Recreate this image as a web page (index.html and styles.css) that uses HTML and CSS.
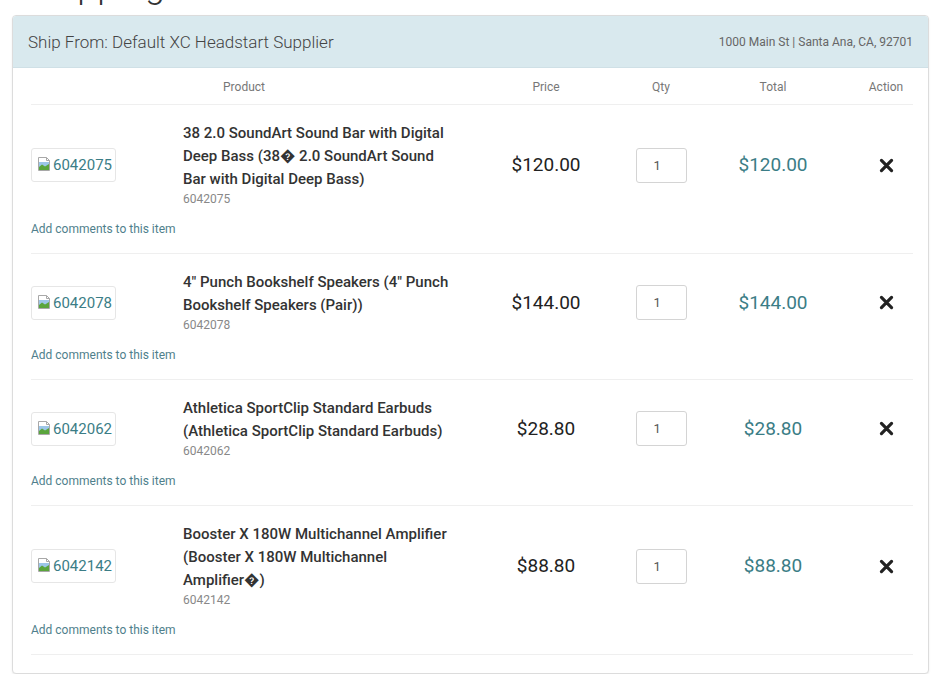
FILE: index.html
```html
<!DOCTYPE html>
<html lang="en">
<head>
<meta charset="utf-8">
<title>Shipping</title>
<link rel="stylesheet" href="styles.css">
</head>
<body>
<div class="page">
  <h2 class="page-title">Shipping</h2>
  <section class="panel">
    <header class="panel-head">
      <span class="ship-from">Ship From: Default XC Headstart Supplier</span>
      <span class="address">1000 Main St | Santa Ana, CA, 92701</span>
    </header>
    <div class="panel-body">
      <div class="cols cols-head">
        <div>Product</div>
        <div>Price</div>
        <div>Qty</div>
        <div>Total</div>
        <div>Action</div>
      </div>

      <div class="item">
        <div class="cols item-row">
          <div class="product">
            <div class="thumb-col">
              <span class="thumb"><svg class="broken" viewBox="0 0 16 16" width="16" height="16"><path d="M2.5 1.5h8l3 3v10h-11z" fill="#fff" stroke="#a8a8a8"/><path d="M10.5 1.5v3h3" fill="none" stroke="#a8a8a8"/><rect x="3" y="6" width="10" height="5" fill="#9cc6e8"/><path d="M3 14V11l3-2.5 3 2 4-2.5v6z" fill="#5aa53c"/></svg>6042075</span>
            </div>
            <div class="info">
              <div class="name">38 2.0 SoundArt Sound Bar with Digital Deep Bass (38&#xFFFD; 2.0 SoundArt Sound Bar with Digital Deep Bass)</div>
              <div class="sku">6042075</div>
            </div>
          </div>
          <div class="price">$120.00</div>
          <div class="qty"><input class="qty-input" type="text" value="1"></div>
          <div class="total">$120.00</div>
          <div class="action"><svg class="remove" viewBox="0 0 16 16" width="15" height="15"><path d="M2.6 2.6l10.8 10.8M13.4 2.6L2.6 13.4" stroke="#222" stroke-width="3.4" stroke-linecap="round"/></svg></div>
        </div>
        <a class="comment">Add comments to this item</a>
      </div>

      <div class="item">
        <div class="cols item-row">
          <div class="product">
            <div class="thumb-col">
              <span class="thumb"><svg class="broken" viewBox="0 0 16 16" width="16" height="16"><path d="M2.5 1.5h8l3 3v10h-11z" fill="#fff" stroke="#a8a8a8"/><path d="M10.5 1.5v3h3" fill="none" stroke="#a8a8a8"/><rect x="3" y="6" width="10" height="5" fill="#9cc6e8"/><path d="M3 14V11l3-2.5 3 2 4-2.5v6z" fill="#5aa53c"/></svg>6042078</span>
            </div>
            <div class="info">
              <div class="name">4" Punch Bookshelf Speakers (4" Punch Bookshelf Speakers (Pair))</div>
              <div class="sku">6042078</div>
            </div>
          </div>
          <div class="price">$144.00</div>
          <div class="qty"><input class="qty-input" type="text" value="1"></div>
          <div class="total">$144.00</div>
          <div class="action"><svg class="remove" viewBox="0 0 16 16" width="15" height="15"><path d="M2.6 2.6l10.8 10.8M13.4 2.6L2.6 13.4" stroke="#222" stroke-width="3.4" stroke-linecap="round"/></svg></div>
        </div>
        <a class="comment">Add comments to this item</a>
      </div>

      <div class="item">
        <div class="cols item-row">
          <div class="product">
            <div class="thumb-col">
              <span class="thumb"><svg class="broken" viewBox="0 0 16 16" width="16" height="16"><path d="M2.5 1.5h8l3 3v10h-11z" fill="#fff" stroke="#a8a8a8"/><path d="M10.5 1.5v3h3" fill="none" stroke="#a8a8a8"/><rect x="3" y="6" width="10" height="5" fill="#9cc6e8"/><path d="M3 14V11l3-2.5 3 2 4-2.5v6z" fill="#5aa53c"/></svg>6042062</span>
            </div>
            <div class="info">
              <div class="name">Athletica SportClip Standard Earbuds (Athletica SportClip Standard Earbuds)</div>
              <div class="sku">6042062</div>
            </div>
          </div>
          <div class="price">$28.80</div>
          <div class="qty"><input class="qty-input" type="text" value="1"></div>
          <div class="total">$28.80</div>
          <div class="action"><svg class="remove" viewBox="0 0 16 16" width="15" height="15"><path d="M2.6 2.6l10.8 10.8M13.4 2.6L2.6 13.4" stroke="#222" stroke-width="3.4" stroke-linecap="round"/></svg></div>
        </div>
        <a class="comment">Add comments to this item</a>
      </div>

      <div class="item item-last">
        <div class="cols item-row">
          <div class="product">
            <div class="thumb-col">
              <span class="thumb"><svg class="broken" viewBox="0 0 16 16" width="16" height="16"><path d="M2.5 1.5h8l3 3v10h-11z" fill="#fff" stroke="#a8a8a8"/><path d="M10.5 1.5v3h3" fill="none" stroke="#a8a8a8"/><rect x="3" y="6" width="10" height="5" fill="#9cc6e8"/><path d="M3 14V11l3-2.5 3 2 4-2.5v6z" fill="#5aa53c"/></svg>6042142</span>
            </div>
            <div class="info">
              <div class="name">Booster X 180W Multichannel Amplifier (Booster X 180W Multichannel Amplifier&#xFFFD;)</div>
              <div class="sku">6042142</div>
            </div>
          </div>
          <div class="price">$88.80</div>
          <div class="qty"><input class="qty-input" type="text" value="1"></div>
          <div class="total">$88.80</div>
          <div class="action"><svg class="remove" viewBox="0 0 16 16" width="15" height="15"><path d="M2.6 2.6l10.8 10.8M13.4 2.6L2.6 13.4" stroke="#222" stroke-width="3.4" stroke-linecap="round"/></svg></div>
        </div>
        <a class="comment">Add comments to this item</a>
      </div>
    </div>
  </section>
</div>
</body>
</html>
```
FILE: styles.css
```css
* { box-sizing: border-box; }
html, body { margin: 0; padding: 0; background: #fff; }
body {
  font-family: Roboto, "Liberation Sans", Arial, sans-serif;
  color: #333;
  overflow: hidden;
}
.page {
  padding: 0 7px 0 12px;
}
.page-title {
  margin: -35px 0 10px 0;
  padding-left: 16px;
  font-size: 36px;
  line-height: 40px;
  font-weight: 300;
  color: #333;
}
.panel {
  border: 1px solid #dcdcdc;
  border-radius: 4px;
  box-shadow: 0 1px 2px rgba(0,0,0,0.08);
  background: #fff;
  overflow: hidden;
}
.panel-head {
  height: 52px;
  display: flex;
  align-items: center;
  justify-content: space-between;
  padding: 0 15px 0 15px;
  background: #d9e9ee;
  border-bottom: 1px solid #cfe0e6;
}
.ship-from {
  font-size: 17px;
  font-weight: 300;
  color: #444;
}
.address {
  font-size: 12px;
  color: #666;
}
.panel-body {
  padding: 0 15px 18px 18px;
}
.cols {
  display: grid;
  grid-template-columns: 426px 178px 52px 172px 54px;
}
.cols-head {
  padding: 11px 0 8px;
  font-size: 12px;
  line-height: 17px;
  color: #777;
  text-align: center;
}
.item {
  border-top: 1px solid #efefef;
  padding: 17px 0 15px;
}
.item-last {
  border-bottom: 1px solid #efefef;
}
.item-row {
  align-items: center;
}
.product {
  display: flex;
  align-items: center;
}
.thumb-col {
  width: 152px;
  flex: none;
}
.thumb {
  display: inline-flex;
  align-items: center;
  height: 34px;
  width: 85px;
  padding: 0 4px 0 4px;
  border: 1px solid #e6e6e6;
  border-radius: 3px;
  font-size: 15px;
  font-weight: 400;
  color: #3b7d86;
  white-space: nowrap;
}
.broken {
  flex: none;
  margin-right: 1px;
  margin-top: -2px;
}
.info {
  width: 272px;
  flex: none;
}
.name {
  font-size: 15px;
  line-height: 23px;
  font-weight: 500;
  color: #333;
}
.sku {
  font-size: 12px;
  line-height: 17px;
  color: #888;
}
.price, .total {
  text-align: center;
  font-size: 19px;
  line-height: 24px;
}
.price { color: #222; }
.total { color: #3b7d86; }
.qty {
  display: flex;
  justify-content: center;
}
.qty-input {
  width: 51px;
  height: 35px;
  border: 1px solid #d4d4d4;
  border-radius: 3px;
  padding: 0 0 0 17px;
  font-family: Roboto, "Liberation Sans", Arial, sans-serif;
  font-size: 13px;
  color: #555;
  background: #fff;
}
.action {
  display: flex;
  justify-content: center;
}
.remove { display: block; }
.comment {
  display: block;
  margin-top: 13px;
  font-size: 12px;
  line-height: 17px;
  color: #4f7f8c;
}
```
